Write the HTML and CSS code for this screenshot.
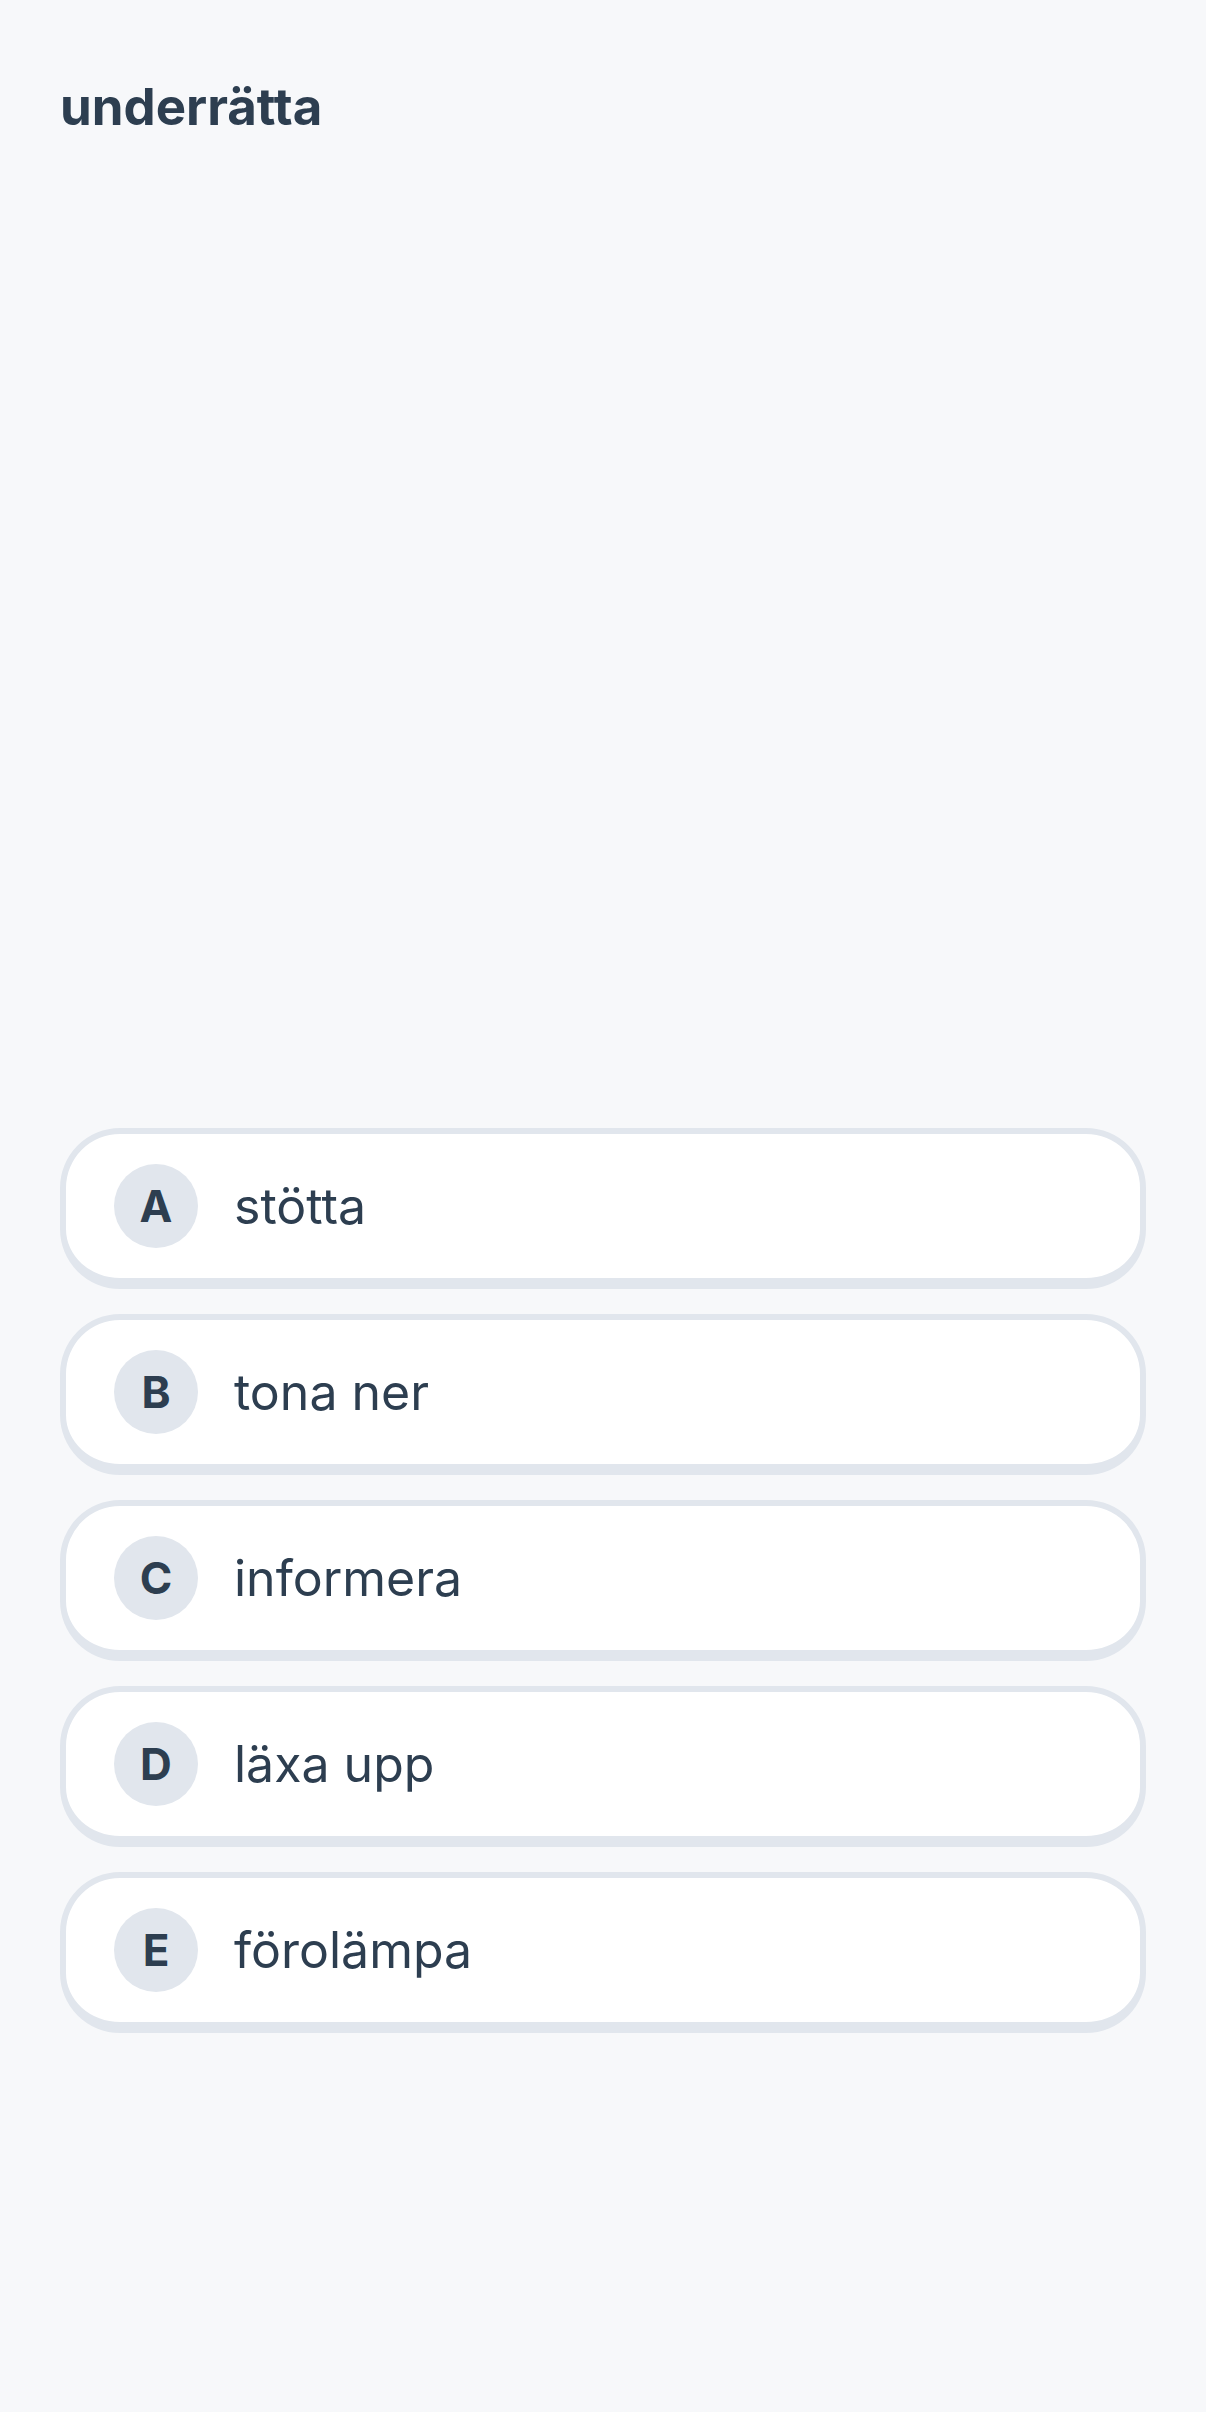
FILE: index.html
```html
<!DOCTYPE html>
<html lang="sv">
<head>
    <meta charset="UTF-8">
    <meta name="viewport" content="width=device-width, initial-scale=1.0">
    <title>underrätta</title>
    <link rel="stylesheet" href="styles.css">
</head>
<body>
    <div class="quiz">
        <h1 class="word">underrätta</h1>
        <div class="options">
            <div class="option">
                <span class="letter">A</span>
                <span class="answer">stötta</span>
            </div>
            <div class="option">
                <span class="letter">B</span>
                <span class="answer">tona ner</span>
            </div>
            <div class="option">
                <span class="letter">C</span>
                <span class="answer">informera</span>
            </div>
            <div class="option">
                <span class="letter">D</span>
                <span class="answer">läxa upp</span>
            </div>
            <div class="option">
                <span class="letter">E</span>
                <span class="answer">förolämpa</span>
            </div>
        </div>
    </div>
</body>
</html>
```

FILE: styles.css
```css
body {
    font-family: "Inter", "Liberation Sans", sans-serif;
    background-color: #f7f8fa;
    color: #2d3e50;
    margin: 0;
    padding: 0;
}
.quiz {
    display: flex;
    flex-direction: column;
    min-height: 100vh;
    box-sizing: border-box;
    padding: 0 60px 379px;
}
.word {
    margin: 75px 0 0;
    font-size: 51px;
    line-height: 64px;
    font-weight: 700;
}
.options {
    margin-top: auto;
    display: flex;
    flex-direction: column;
    gap: 25px;
}
.option {
    display: flex;
    align-items: center;
    gap: 36px;
    height: 144px;
    padding: 0 48px;
    background: white;
    border: 6px solid #e1e6ed;
    border-bottom-width: 11px;
    border-radius: 60px;
}
.letter {
    width: 84px;
    height: 84px;
    border-radius: 50%;
    background-color: #e1e6ed;
    display: flex;
    align-items: center;
    justify-content: center;
    font-size: 44px;
    font-weight: 700;
}
.answer {
    font-size: 50px;
}
```
